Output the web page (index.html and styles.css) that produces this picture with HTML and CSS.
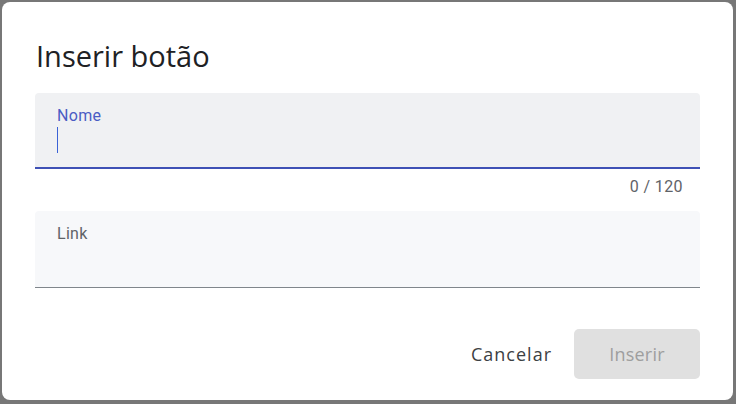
FILE: index.html
```html
<!DOCTYPE html>
<html lang="pt">
<head>
<meta charset="utf-8">
<title>Inserir botão</title>
<link rel="stylesheet" href="styles.css">
</head>
<body>
<div class="dialog">
  <h1 class="title">Inserir botão</h1>
  <div class="field field-active">
    <span class="label">Nome</span>
    <span class="cursor"></span>
  </div>
  <div class="counter">0 / 120</div>
  <div class="field field-idle">
    <span class="label">Link</span>
  </div>
  <div class="actions">
    <button class="btn btn-text">Cancelar</button>
    <button class="btn btn-disabled">Inserir</button>
  </div>
</div>
</body>
</html>
```

FILE: styles.css
```css
html, body {
  margin: 0;
  padding: 0;
}
body {
  background: #777777;
  width: 736px;
  height: 404px;
  padding: 2px 3px 4px 2px;
  box-sizing: border-box;
  font-family: Roboto, "Noto Sans", sans-serif;
}
.dialog {
  width: 731px;
  height: 398px;
  background: #ffffff;
  border-radius: 8px;
  box-sizing: border-box;
  padding: 0 33px 0 33px;
  display: flex;
  flex-direction: column;
}
.title {
  margin: 34px 0 0 1px;
  font-family: "Open Sans", sans-serif;
  font-weight: 400;
  font-size: 29px;
  line-height: 40px;
  color: #202124;
  letter-spacing: 0;
}
.field {
  margin-top: 17px;
  height: 76px;
  box-sizing: border-box;
  border-radius: 4px 4px 0 0;
  padding: 14px 22px 0 22px;
  display: flex;
  flex-direction: column;
}
.field-active {
  background: #f0f1f3;
  border-bottom: 2px solid #3f51b5;
}
.field-idle {
  margin-top: 15px;
  height: 77px;
  background: #f7f8fa;
  border-bottom: 1px solid #80868b;
}
.label {
  font-size: 16px;
  line-height: 18px;
  letter-spacing: 0.3px;
}
.field-active .label {
  color: #4a5cc4;
}
.field-idle .label {
  color: #5f6368;
}
.cursor {
  display: block;
  width: 1px;
  height: 26px;
  margin-top: 2px;
  background: #3b62d6;
}
.counter {
  align-self: flex-end;
  margin: 9px 17px 0 0;
  font-size: 16px;
  line-height: 18px;
  letter-spacing: 0.4px;
  color: #5f6368;
}
.actions {
  margin-top: 41px;
  display: flex;
  justify-content: flex-end;
  align-items: center;
  gap: 8px;
}
.btn {
  font-family: "Open Sans", sans-serif;
  font-size: 18px;
  border: none;
  border-radius: 5px;
  height: 50px;
  padding: 0;
  cursor: pointer;
}
.btn-text {
  background: transparent;
  color: #3c4043;
  padding: 0 14px;
  letter-spacing: 1px;
}
.btn-disabled {
  width: 126px;
  background: #e0e0e0;
  color: #9e9e9e;
  letter-spacing: 0.2px;
}
```
